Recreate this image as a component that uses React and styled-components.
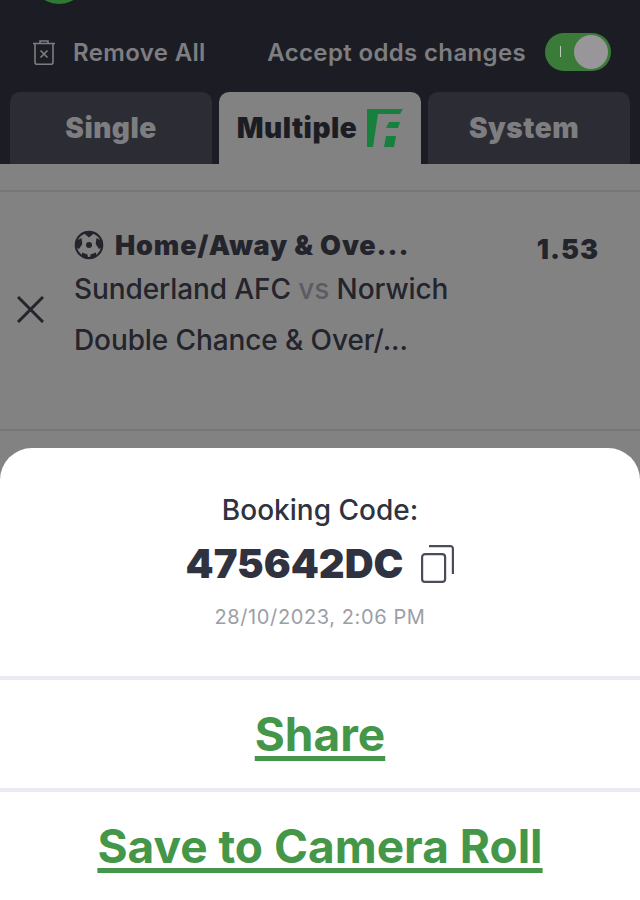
import React from 'react';

import styled, { createGlobalStyle } from 'styled-components';

const GlobalStyle = createGlobalStyle`
	html, body {
		margin: 0;
		padding: 0;
		background: #828282;
	}
	body {
		font-family: Inter, "Liberation Sans", sans-serif;
	}
`

const Page = styled.div`
	width: 640px;
	height: 900px;
	overflow: hidden;
	display: flex;
	flex-direction: column;
	position: relative;
	background: #828282;
`

const Header = styled.div`
	height: 164px;
	flex: none;
	background: #1c1d24;
	position: relative;
	display: flex;
	flex-direction: column;
`

const Avatar = styled.div`
	position: absolute;
	left: 42px;
	top: -14px;
	width: 34px;
	height: 18px;
	border-radius: 50%;
	background: #2c7a33;
`

const Controls = styled.div`
	height: 92px;
	box-sizing: border-box;
	padding: 12px 29px 0 33px;
	display: flex;
	align-items: center;
	justify-content: space-between;
`

const RemoveAll = styled.div`
	display: flex;
	align-items: center;
	gap: 18px;
	font-size: 24px;
	font-weight: 600;
	letter-spacing: 0.35px;
	color: #7e7e80;
`

const AcceptOdds = styled.div`
	display: flex;
	align-items: center;
	gap: 19px;
	font-size: 24px;
	font-weight: 600;
	letter-spacing: 0.35px;
	color: #7e7e80;
`

const Toggle = styled.div`
	width: 66px;
	height: 38px;
	border-radius: 19px;
	background: #3a7b39;
	position: relative;
`

const ToggleMark = styled.div`
	position: absolute;
	left: 15px;
	top: 13px;
	width: 1px;
	height: 11px;
	background: #b9cdb8;
`

const ToggleKnob = styled.div`
	position: absolute;
	right: 3px;
	top: 2px;
	width: 34px;
	height: 34px;
	border-radius: 50%;
	background: #989698;
`

const Tabs = styled.div`
	flex: 1;
	display: grid;
	grid-template-columns: repeat(3, 1fr);
	padding: 0 10px;
	gap: 7px;
`

const Tab = styled.div`
	box-sizing: border-box;
	padding-right: ${p => p.$inset || 0}px;
	border-radius: 10px 10px 0 0;
	background: ${p => p.$active ? '#828282' : '#2c2d34'};
	color: ${p => p.$active ? '#1c1d24' : '#7e7e80'};
	font-size: 28px;
	font-weight: 900;
	letter-spacing: 0.5px;
	display: flex;
	align-items: center;
	justify-content: center;
	gap: 10px;
`

const Slip = styled.div`
	flex: 1;
	display: flex;
	flex-direction: column;
	padding-top: 26px;
`

const BetRow = styled.div`
	height: 241px;
	box-sizing: border-box;
	border-top: 2px solid #777777;
	border-bottom: 2px solid #777777;
	display: grid;
	grid-template-columns: 74px 1fr auto;
	padding: 36px 41px 0 0;
`

const RemoveCell = styled.div`
	padding: 68px 0 0 17px;
	box-sizing: border-box;
`

const BetInfo = styled.div`
	display: flex;
	flex-direction: column;
	color: #23242c;
	font-size: 28px;
	font-weight: 500;
	letter-spacing: -0.1px;
`

const Market = styled.div`
	display: flex;
	align-items: center;
	gap: 11px;
	font-size: 27px;
	font-weight: 900;
	letter-spacing: 0.85px;
	height: 34px;
`

const Teams = styled.div`
	margin-top: 5px;
	height: 44px;
	line-height: 44px;
`

const Vs = styled.span`
	color: #5c5d63;
`

const Selection = styled.div`
	margin-top: 7px;
	height: 44px;
	line-height: 44px;
`

const Odds = styled.div`
	margin-top: 5px;
	font-size: 27px;
	font-weight: 900;
	letter-spacing: 1px;
	color: #23242c;
	height: 34px;
	line-height: 34px;
`

const Sheet = styled.div`
	position: absolute;
	left: 0;
	right: 0;
	bottom: 0;
	top: 448px;
	background: #ffffff;
	border-radius: 32px 32px 0 0;
	display: flex;
	flex-direction: column;
`

const CodeBlock = styled.div`
	height: 228px;
	box-sizing: border-box;
	padding-top: 46px;
	display: flex;
	flex-direction: column;
	align-items: center;
	color: #30333f;
`

const CodeLabel = styled.div`
	font-size: 28px;
	font-weight: 500;
	line-height: 32px;
`

const CodeRow = styled.div`
	margin-top: 15px;
	display: flex;
	align-items: center;
	gap: 18px;
	font-size: 40px;
	font-weight: 900;
	line-height: 46px;
`

const Timestamp = styled.div`
	margin-top: 17px;
	font-size: 20px;
	font-weight: 400;
	line-height: 26px;
	color: #9c9ea6;
	letter-spacing: 0.6px;
`

const Action = styled.div`
	height: 112px;
	box-sizing: border-box;
	border-top: 4px solid #ebe9f3;
	display: flex;
	align-items: center;
	justify-content: center;
	color: #449648;
	font-size: 46px;
	font-weight: 700;
	text-decoration: underline;
	text-decoration-thickness: 5px;
	text-underline-offset: 5px;
	text-decoration-skip-ink: none;
`

const TrashIcon = () => (
	<svg width="22" height="25" viewBox="0 0 22 25" fill="none" stroke="#7e7e80" strokeWidth="1.6">
		<path d="M0 3.5h22M7 3.5V1h8v2.5" />
		<path d="M2 3.5v18.7a2 2 0 0 0 2 2h14a2 2 0 0 0 2-2V3.5" />
		<path d="M7.5 10.5l7 7M14.5 10.5l-7 7" />
	</svg>
)

const FLogo = () => (
	<svg width="36" height="38" viewBox="0 0 36 38">
		<path fill="#17803f" d="M0 0h36l-3 5H11L6 38H0z" />
		<path fill="#17803f" d="M22 13h11l-2 6H19zM19 27h10l-2 11H17z" />
	</svg>
)

const BallIcon = () => (
	<svg width="30" height="30" viewBox="0 0 30 30">
		<circle cx="15" cy="15" r="13.2" fill="none" stroke="#23242c" strokeWidth="2.2" />
		<circle cx="15" cy="15" r="3" fill="#23242c" />
		<path fill="#23242c" d="M9 2.5h12L15 7.5zM2 11l5.5-3 .8 6-3.3 5-3-2zM28 11l-5.5-3-.8 6 3.3 5 3-2zM8 22.5l5.5 2 .5 3.5-6-1.5zM22 22.5l-5.5 2-.5 3.5 6-1.5z" />
	</svg>
)

const CloseIcon = () => (
	<svg width="27" height="27" viewBox="0 0 27 27" stroke="#23242c" strokeWidth="3">
		<path d="M1 1l25 25M26 1L1 26" />
	</svg>
)

const CopyIcon = () => (
	<svg width="33" height="38" viewBox="0 0 33 38" fill="none" stroke="#4a4d58" strokeWidth="2.2">
		<rect x="1.1" y="9.1" width="23" height="27.8" rx="3" />
		<path d="M8 1.1h21.4a2.5 2.5 0 0 1 2.5 2.5V29" />
	</svg>
)

const App = () => {

	return (
		<Page>
			<GlobalStyle />
			<Header>
				<Avatar />
				<Controls>
					<RemoveAll><TrashIcon /> Remove All</RemoveAll>
					<AcceptOdds>
						Accept odds changes
						<Toggle><ToggleMark /><ToggleKnob /></Toggle>
					</AcceptOdds>
				</Controls>
				<Tabs>
					<Tab>Single</Tab>
					<Tab $active>Multiple <FLogo /></Tab>
					<Tab $inset={10}>System</Tab>
				</Tabs>
			</Header>
			<Slip>
				<BetRow>
					<RemoveCell><CloseIcon /></RemoveCell>
					<BetInfo>
						<Market><BallIcon /> Home/Away &amp; Ove...</Market>
						<Teams>Sunderland AFC <Vs>vs</Vs> Norwich</Teams>
						<Selection>Double Chance &amp; Over/...</Selection>
					</BetInfo>
					<Odds>1.53</Odds>
				</BetRow>
			</Slip>
			<Sheet>
				<CodeBlock>
					<CodeLabel>Booking Code:</CodeLabel>
					<CodeRow>475642DC <CopyIcon /></CodeRow>
					<Timestamp>28/10/2023, 2:06 PM</Timestamp>
				</CodeBlock>
				<Action>Share</Action>
				<Action>Save to Camera Roll</Action>
			</Sheet>
		</Page>
	)
}

export default App;
